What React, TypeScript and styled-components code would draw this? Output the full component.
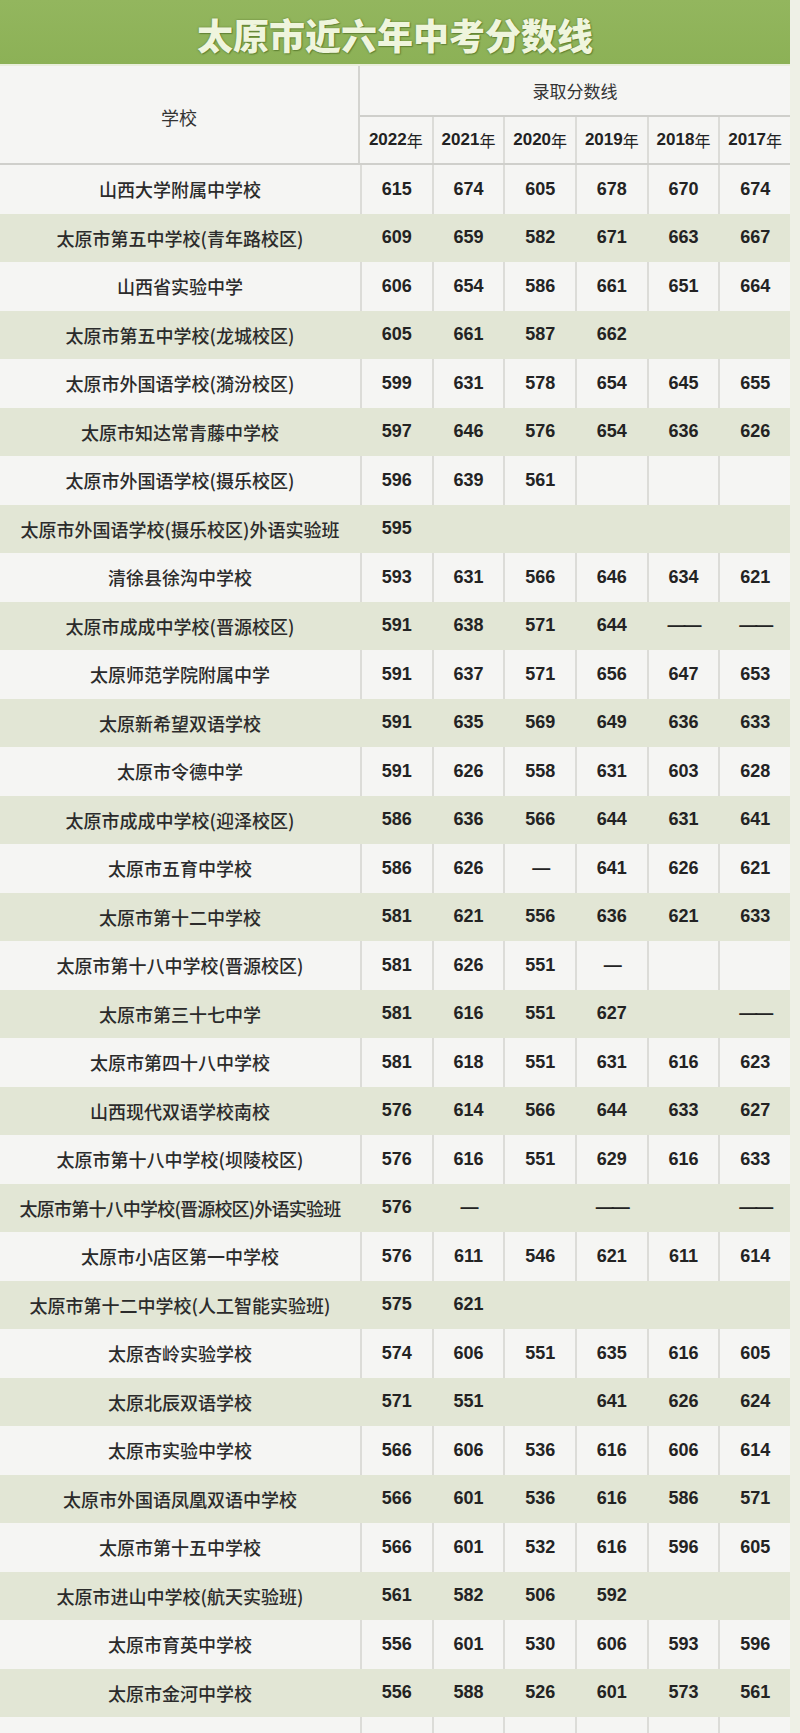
import React from 'react';
import styled, { createGlobalStyle } from 'styled-components';

type Row = { name: string; scores: string[] };

const years = ['2022', '2021', '2020', '2019', '2018', '2017'];

// '' = empty cell, '—' short dash, '——' long dash
const rows: Row[] = [
    { name: '山西大学附属中学校', scores: ['615', '674', '605', '678', '670', '674'] },
    { name: '太原市第五中学校(青年路校区)', scores: ['609', '659', '582', '671', '663', '667'] },
    { name: '山西省实验中学', scores: ['606', '654', '586', '661', '651', '664'] },
    { name: '太原市第五中学校(龙城校区)', scores: ['605', '661', '587', '662', '', ''] },
    { name: '太原市外国语学校(漪汾校区)', scores: ['599', '631', '578', '654', '645', '655'] },
    { name: '太原市知达常青藤中学校', scores: ['597', '646', '576', '654', '636', '626'] },
    { name: '太原市外国语学校(摄乐校区)', scores: ['596', '639', '561', '', '', ''] },
    { name: '太原市外国语学校(摄乐校区)外语实验班', scores: ['595', '', '', '', '', ''] },
    { name: '清徐县徐沟中学校', scores: ['593', '631', '566', '646', '634', '621'] },
    { name: '太原市成成中学校(晋源校区)', scores: ['591', '638', '571', '644', '——', '——'] },
    { name: '太原师范学院附属中学', scores: ['591', '637', '571', '656', '647', '653'] },
    { name: '太原新希望双语学校', scores: ['591', '635', '569', '649', '636', '633'] },
    { name: '太原市令德中学', scores: ['591', '626', '558', '631', '603', '628'] },
    { name: '太原市成成中学校(迎泽校区)', scores: ['586', '636', '566', '644', '631', '641'] },
    { name: '太原市五育中学校', scores: ['586', '626', '—', '641', '626', '621'] },
    { name: '太原市第十二中学校', scores: ['581', '621', '556', '636', '621', '633'] },
    { name: '太原市第十八中学校(晋源校区)', scores: ['581', '626', '551', '—', '', ''] },
    { name: '太原市第三十七中学', scores: ['581', '616', '551', '627', '', '——'] },
    { name: '太原市第四十八中学校', scores: ['581', '618', '551', '631', '616', '623'] },
    { name: '山西现代双语学校南校', scores: ['576', '614', '566', '644', '633', '627'] },
    { name: '太原市第十八中学校(坝陵校区)', scores: ['576', '616', '551', '629', '616', '633'] },
    { name: '太原市第十八中学校(晋源校区)外语实验班', scores: ['576', '—', '', '——', '', '——'] },
    { name: '太原市小店区第一中学校', scores: ['576', '611', '546', '621', '611', '614'] },
    { name: '太原市第十二中学校(人工智能实验班)', scores: ['575', '621', '', '', '', ''] },
    { name: '太原杏岭实验学校', scores: ['574', '606', '551', '635', '616', '605'] },
    { name: '太原北辰双语学校', scores: ['571', '551', '', '641', '626', '624'] },
    { name: '太原市实验中学校', scores: ['566', '606', '536', '616', '606', '614'] },
    { name: '太原市外国语凤凰双语中学校', scores: ['566', '601', '536', '616', '586', '571'] },
    { name: '太原市第十五中学校', scores: ['566', '601', '532', '616', '596', '605'] },
    { name: '太原市进山中学校(航天实验班)', scores: ['561', '582', '506', '592', '', ''] },
    { name: '太原市育英中学校', scores: ['556', '601', '530', '606', '593', '596'] },
    { name: '太原市金河中学校', scores: ['556', '588', '526', '601', '573', '561'] },
    { name: '', scores: ['', '', '', '', '', ''] },
];

const App: React.FC = () => {
    return (
        <>
            <GlobalStyle />
            <Page>
                <Sheet>
                    <TitleBar>
                        <h1>太原市近六年中考分数线</h1>
                    </TitleBar>

                    <HeadGrid>
                        <SchoolHead>学校</SchoolHead>
                        <GroupHead>录取分数线</GroupHead>
                        {years.map((y, i) => (
                            <YearHead key={y} $first={i === 0}>
                                <b>{y}</b>年
                            </YearHead>
                        ))}
                    </HeadGrid>

                    {rows.map((r, i) => {
                        const tinted = i % 2 === 1;
                        return (
                            <BodyRow key={i} $tinted={tinted}>
                                <NameCell $tight={r.name.length > 19}>{r.name}</NameCell>
                                {r.scores.map((s, j) => (
                                    <ScoreCell key={j} $tinted={tinted} $dash={s.startsWith('—')}>
                                        {s}
                                    </ScoreCell>
                                ))}
                            </BodyRow>
                        );
                    })}
                </Sheet>
            </Page>
        </>
    );
};

// --- STYLED COMPONENTS ---
const GlobalStyle = createGlobalStyle`
    html, body {
        margin: 0;
        padding: 0;
        background: #eef0e6;
    }
    body {
        font-family: "Liberation Sans", "Noto Sans CJK SC", sans-serif;
        color: #222;
    }
`;

const Page = styled.div`
    width: 800px;
    height: 1733px;
    overflow: hidden;
    background: #eef0e6;
`;

const Sheet = styled.div`
    width: 790px;
`;

const TitleBar = styled.header`
    height: 66px;
    display: flex;
    align-items: center;
    justify-content: center;
    background: linear-gradient(180deg, #93b65e 0%, #8cb156 100%);
    border-bottom: 2px solid #e9eedc;
    box-sizing: border-box;

    h1 {
        margin: 0;
        padding-top: 4px;
        font-family: "Noto Sans CJK SC", sans-serif;
        font-weight: 900;
        font-size: 36px;
        letter-spacing: 0;
        color: #eff5dd;
        text-shadow: 0 0 2px rgba(70, 100, 30, 0.7), 1px 1px 1px rgba(70, 100, 30, 0.5);
    }
`;

const HeadGrid = styled.div`
    display: grid;
    grid-template-columns: 360px repeat(6, 1fr);
    grid-template-rows: 51px 46px;
    background: #f5f5f3;
    border-bottom: 2px solid #cfcfcb;
`;

const SchoolHead = styled.div`
    grid-row: 1 / span 2;
    display: flex;
    align-items: center;
    justify-content: center;
    padding-top: 4px;
    border-right: 2px solid #d4d4d0;
    font-family: "Noto Sans CJK SC", sans-serif;
    font-size: 18px;
    color: #333;
`;

const GroupHead = styled.div`
    grid-column: 2 / span 6;
    display: flex;
    align-items: center;
    justify-content: center;
    border-bottom: 2px solid #cfcfcb;
    font-family: "Noto Sans CJK SC", sans-serif;
    font-size: 17px;
    color: #333;
`;

const YearHead = styled.div<{ $first?: boolean }>`
    display: flex;
    align-items: center;
    justify-content: center;
    border-left: ${({ $first }) => ($first ? 'none' : '2px solid #dcdcd8')};
    font-family: "Noto Sans CJK SC", sans-serif;
    font-size: 16px;
    color: #222;

    b {
        font-family: "Liberation Sans", sans-serif;
        font-size: 17px;
        font-weight: 700;
    }
`;

const BodyRow = styled.div<{ $tinted: boolean }>`
    display: grid;
    grid-template-columns: 360px repeat(6, 1fr);
    height: 48.5px;
    background: ${({ $tinted }) => ($tinted ? '#e2e6d5' : '#f5f5f3')};
`;

const NameCell = styled.div<{ $tight?: boolean }>`
    display: flex;
    align-items: center;
    justify-content: center;
    white-space: nowrap;
    overflow: hidden;
    font-family: "Noto Sans CJK SC", sans-serif;
    font-weight: 500;
    font-size: 18px;
    letter-spacing: ${({ $tight }) => ($tight ? '-0.8px' : '0')};
    color: #2b2b2b;
`;

const ScoreCell = styled.div<{ $tinted: boolean; $dash?: boolean }>`
    display: flex;
    align-items: center;
    justify-content: center;
    border-left: ${({ $tinted }) => ($tinted ? '2px solid transparent' : '2px solid #dcdcd8')};
    font-family: "Liberation Sans", sans-serif;
    font-weight: 700;
    font-size: 18px;
    letter-spacing: ${({ $dash }) => ($dash ? '-2px' : '0')};
    color: #232323;
`;

export default App;
